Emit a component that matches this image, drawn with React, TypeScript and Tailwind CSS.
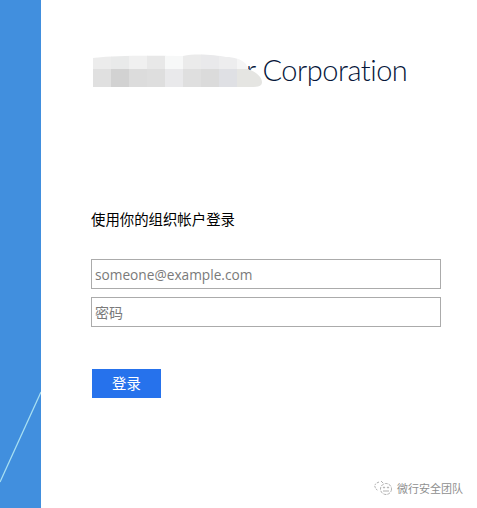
const top = ["#ececec", "#e9eaea", "#f0f0f0", "#e8e8e8", "#f7f8f8", "#ebebeb", "#e9e9eb", "#ededee", "#f5f5f5"];
const bottom = ["#e0e0e0", "#d2d2d2", "#dcdcdc", "#dedede", "#e9e9eb", "#dfdfdf", "#dbdbdb", "#dfe0e4", "#e5e5e2"];

function Mosaic() {
  return (
    <svg className="absolute left-0 top-[-1px]" width="172" height="36" viewBox="0 0 172 36">
      <defs>
        <clipPath id="blob">
          <path d="M2 5 C30 2 60 3 92 3 C105 0 125 2 135 4 C143 4 150 6 155 11 L157 16 C165 19 171 24 171 29 C171 33 168 34 160 34 L2 34 Z" />
        </clipPath>
      </defs>
      <g clipPath="url(#blob)">
        {top.map((c, i) => (
          <rect key={i} x={2 + i * 18} y={0} width={18.5} height={16} fill={c} />
        ))}
        {bottom.map((c, i) => (
          <rect key={i} x={2 + i * 18} y={16} width={i === 8 ? 30 : 18.5} height={18} fill={c} />
        ))}
      </g>
    </svg>
  );
}

function WeChat() {
  return (
    <svg width="24" height="18" viewBox="0 0 24 18" fill="none" stroke="#b0b0b0" strokeWidth="1">
      <path d="M7 3 C4 4 2 6 3 8 C4 10 5 11 6 12" strokeDasharray="2 1" />
      <circle cx="14" cy="10" r="5.500" strokeDasharray="3 1" />
      <circle cx="12" cy="8.500" r="0.600" fill="#b0b0b0" />
      <circle cx="16" cy="8.500" r="0.600" fill="#b0b0b0" />
      <path d="M11 12 H17" />
      <path d="M9 2 L11 4" />
    </svg>
  );
}

export default function App() {
  return (
    <div className="relative flex h-[508px] w-[477px] overflow-hidden bg-white font-['Noto_Sans_CJK_SC',sans-serif]">
      <aside className="relative h-full w-[41px] shrink-0 bg-[#418fde]">
        <svg className="absolute inset-0" width="41" height="508" viewBox="0 0 41 508">
          <line x1="41" y1="392" x2="0" y2="482" stroke="#a8e0f2" strokeWidth="1.300" />
        </svg>
      </aside>
      <main className="flex flex-1 flex-col pl-[50px]">
        <div className="relative mt-[54px] h-[34px] w-[320px]">
          <h1 className="pl-[155px] font-['Lato',sans-serif] text-[29px] leading-[31px] font-light tracking-[-0.5px] whitespace-nowrap text-[#06163a]">
            r Corporation
          </h1>
          <Mosaic />
        </div>
        <p className="mt-[121px] text-[14.4px] leading-[20px] text-black">使用你的组织帐户登录</p>
        <input
          type="text"
          placeholder="someone@example.com"
          className="mt-[30px] h-[30px] w-[350px] border border-[#ababab] bg-white px-[3px] font-['Open_Sans',sans-serif] text-[13.7px] outline-none placeholder:text-[#7a7a7a]"
        />
        <input
          type="password"
          placeholder="密码"
          className="mt-[8px] h-[30px] w-[350px] border border-[#ababab] bg-white px-[3px] text-[14px] outline-none placeholder:text-[#7a7a7a]"
        />
        <button className="mt-[42px] ml-px h-[29px] w-[69px] bg-[#2672ec] pb-[2px] text-[14.4px] text-white">登录</button>
      </main>
      <div className="absolute left-[372px] top-[479px] flex items-center">
        <WeChat />
        <span className="ml-px text-[11px] leading-[18px] whitespace-nowrap text-[#8f8f8f]">微行安全团队</span>
      </div>
    </div>
  );
}
